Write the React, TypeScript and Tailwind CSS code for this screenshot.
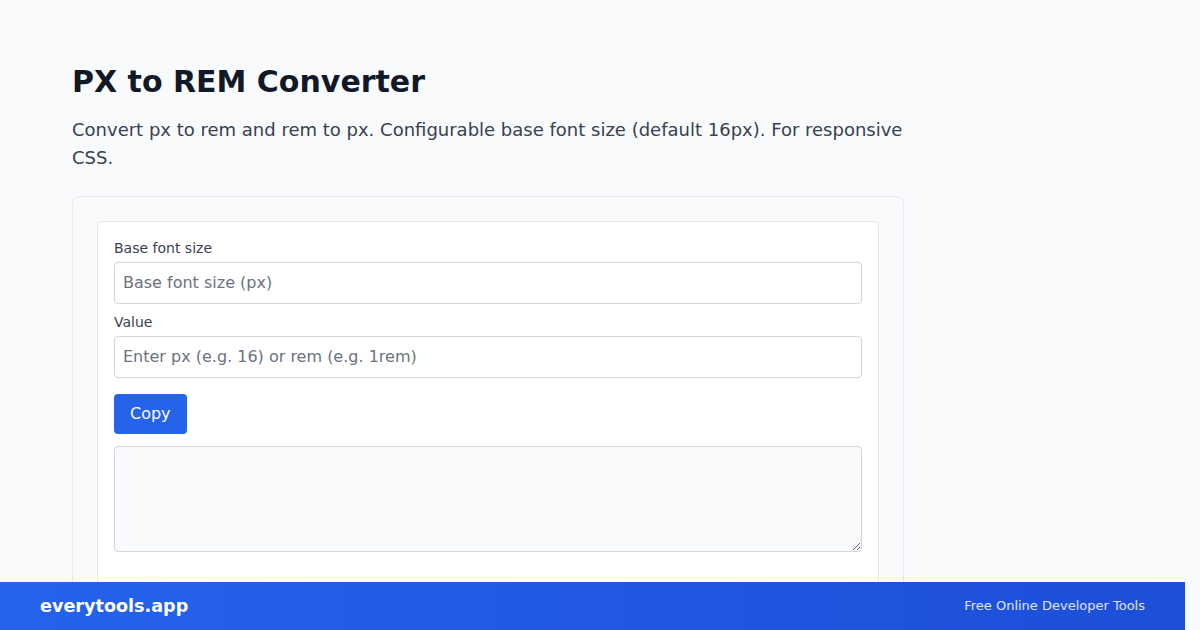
import React from 'react';

export default function App() {
    return (
        <div className="min-h-[630px] bg-[#f8fafc] font-['DejaVu_Sans',sans-serif]">
            <main className="ml-[72px] w-[832px] pt-16 pb-24">
                <h1 className="text-[30px] leading-9 font-bold text-[#111827]">PX to REM Converter</h1>
                <p className="mt-4 text-lg leading-7 text-[#374151]">
                    Convert px to rem and rem to px. Configurable base font size (default 16px). For responsive CSS.
                </p>
                <section className="mt-6 border border-[#e5e7eb] rounded-lg bg-[#f8fafc] p-6">
                    <div className="bg-white border border-[#e5e7eb] rounded-md p-4">
                        <label className="block text-sm leading-5 text-[#374151]">Base font size</label>
                        <input
                            type="text"
                            placeholder="Base font size (px)"
                            className="mt-1 block w-full border border-[#d1d5db] rounded px-2 py-2 text-base leading-6 text-[#111827] placeholder:text-[#6b7280] outline-none"
                        />
                        <label className="mt-2 block text-sm leading-5 text-[#374151]">Value</label>
                        <input
                            type="text"
                            placeholder="Enter px (e.g. 16) or rem (e.g. 1rem)"
                            className="mt-1 block w-full border border-[#d1d5db] rounded px-2 py-2 text-base leading-6 text-[#111827] placeholder:text-[#6b7280] outline-none"
                        />
                        <button className="mt-4 bg-[#2563eb] text-white rounded px-4 py-2 text-base leading-6">Copy</button>
                        <textarea
                            readOnly
                            className="mt-3 block w-full h-[106px] border border-[#d1d5db] rounded bg-[#f9fafb] p-2 text-sm outline-none"
                        />
                        <div className="h-24" />
                    </div>
                </section>
            </main>
            <footer className="fixed bottom-0 left-0 w-[1185px] h-12 px-10 flex items-center justify-between bg-gradient-to-r from-[#2563eb] to-[#1d4ed8] text-white">
                <span className="text-[17.6px] font-bold">everytools.app</span>
                <span className="text-[13px] text-white/85">Free Online Developer Tools</span>
            </footer>
        </div>
    );
}
